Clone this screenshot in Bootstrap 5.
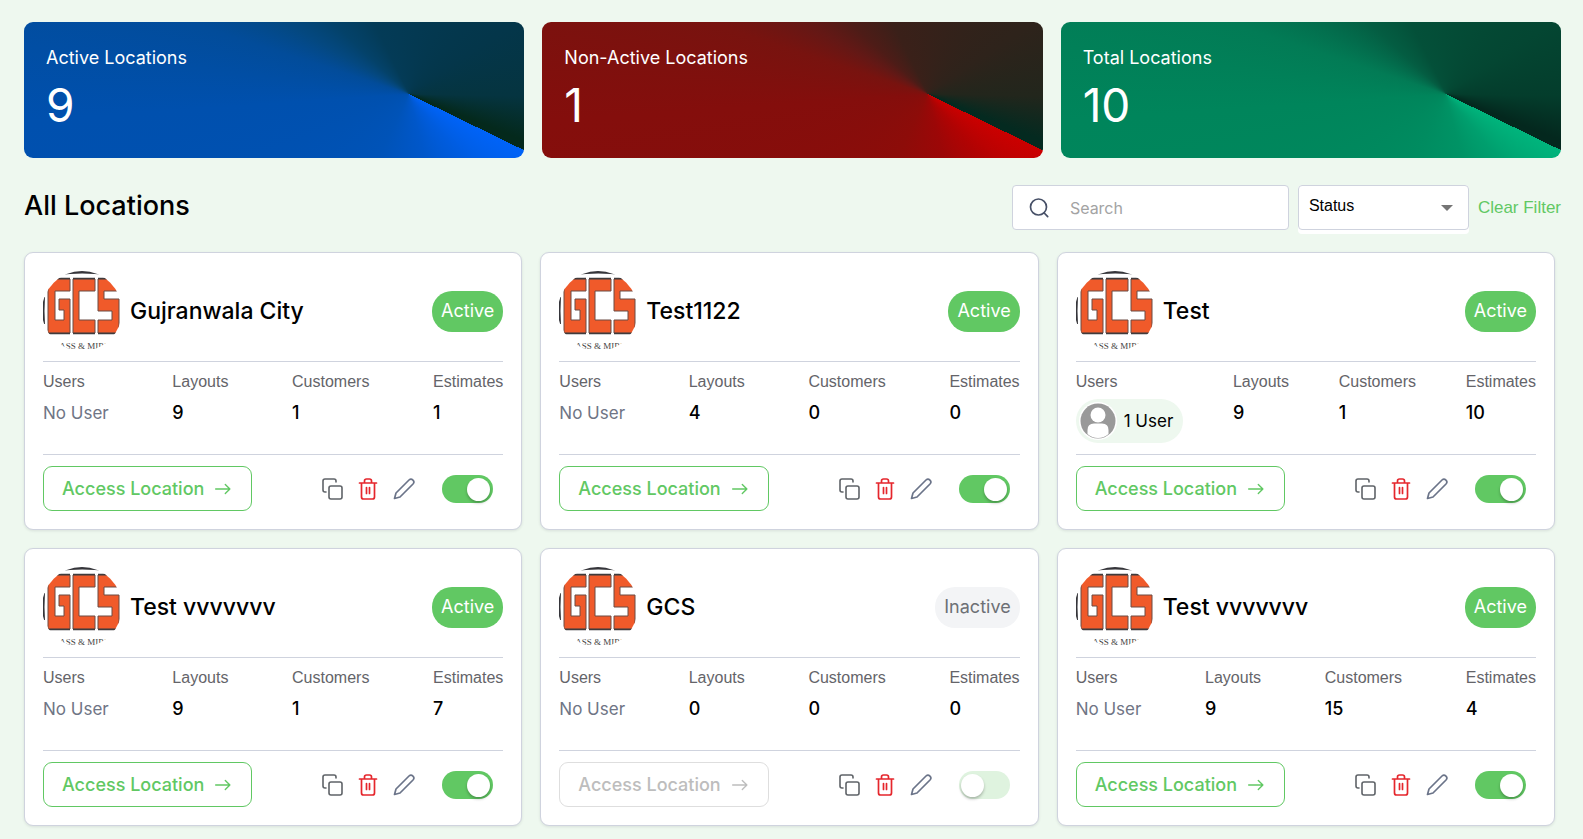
<!DOCTYPE html>
<html lang="en">
<head>
<meta charset="utf-8">
<meta name="viewport" content="width=device-width, initial-scale=1">
<title>Locations</title>
<link href="https://cdn.jsdelivr.net/npm/bootstrap@5.3.0/dist/css/bootstrap.min.css" rel="stylesheet">
<style>
  :root { --brand: #61c863; --line: #cfd3de; --page: #eef8ef; }
  body { background: var(--page); font-family: Inter, "Liberation Sans", sans-serif; color: #000; font-size: 18px; }
  .page { padding: 22px 22px 12px 24px; }
  .tiles, .cards { display: grid; grid-template-columns: repeat(3, minmax(0, 1fr)); gap: 18px; }
  .cards { padding-right: 6px; }
  .arial { font-family: "Liberation Sans", Arial, sans-serif; font-size: 16px; line-height: 24px; }

  .tile { height: 136px; border-radius: 9px; color: #fff; padding: 22px; }
  .tile-label { font-size: 18px; line-height: 28px; font-weight: 400; margin: 0; }
  .tile-count { font-size: 46px; line-height: 66px; font-weight: 400; margin: 0; }
  .tile-blue { background: conic-gradient(from 116deg at 77% 53%, #0063f8 0deg, #005cde 25deg, #0057ca 50deg, #0053b8 90deg, #0050ae 150deg, #024c9a 172deg, #044880 184deg, #04426a 197deg, #043b57 218deg, #04364a 300deg, #053440 335deg, #04291c 356deg); }
  .tile-red { background: conic-gradient(from 116deg at 77% 53%, #cb0000 0deg, #b00303 25deg, #9c0707 50deg, #8d0c09 90deg, #840e0c 150deg, #78130f 172deg, #641815 184deg, #4d1c17 197deg, #3a2019 218deg, #2e231b 300deg, #22261c 335deg, #042a20 356deg); }
  .tile-green { background: conic-gradient(from 116deg at 77% 53%, #00b47c 0deg, #009f6e 25deg, #009365 50deg, #008c60 90deg, #00855b 150deg, #027b55 172deg, #036c4c 184deg, #045d42 197deg, #045039 218deg, #044632 300deg, #043d2c 335deg, #04281e 356deg); }

  .toolbar { padding: 27px 0 18px; min-height: 94px; }
  .page-title { font-size: 27px; line-height: 42px; font-weight: 500; margin: 0; }
  .search-box { width: 277px; height: 45px; background: #fff; border: 1px solid var(--line); border-radius: 4px; padding: 0 16px; gap: 21px; }
  .search-box input { font-size: 16px; border: 0; outline: 0; background: none; min-width: 0; }
  .search-box input::placeholder { color: #a3a3a3; }
  .status-box { width: 171px; background: #fff; border-radius: 4px; padding-bottom: 4px; margin-bottom: -4px; }
  .status-box select { height: 45px; border: 1px solid var(--line); border-radius: 4px; color: #000; padding: 0 36px 3px 10px;
    background: #fff url("data:image/svg+xml,%3csvg xmlns='http://www.w3.org/2000/svg' viewBox='0 0 12 6'%3e%3cpath fill='%23757575' d='M0 0h12L6 6z'/%3e%3c/svg%3e") no-repeat right 15px center / 12px 6px; }
  .clear-link { color: var(--brand); text-decoration: none; font-size: 17px; }

  .loc { background: #fff; border: 1px solid var(--line); border-radius: 9px; padding: 18px; box-shadow: 0 1px 3px rgba(16, 24, 40, .1); }
  .loc-head { padding-bottom: 10px; border-bottom: 1px solid var(--line); gap: 7px; }
  .loc-name { font-size: 23px; line-height: 32px; font-weight: 500; margin: 0; }
  .state { font-size: 18px; line-height: 27px; padding: 6px 9px 8px; border-radius: 20px; min-width: 71px; text-align: center; }
  .state-on { background: var(--brand); color: #fff; }
  .state-off { background: #f3f4f6; color: #6d7075; }
  .facts { padding: 8px 0 11px; border-bottom: 1px solid var(--line); margin: 0; }
  .facts dt { color: #646469; font-weight: 400; margin-bottom: 5px; }
  .facts dd { margin: 0; min-height: 44px; line-height: 27px; font-weight: 500; }
  .facts .nobody { color: #6f7585; font-size: 17px; font-weight: 400; }
  .user-pill { height: 44px; border-radius: 22px; background: var(--page); padding: 0 10px 0 3px; gap: 7px; font-size: 17px; font-weight: 400; }
  .loc-foot { padding-top: 11px; }
  .access { height: 45px; border: 1px solid var(--brand); border-radius: 9px; background: #fff; color: var(--brand); font-size: 18px; font-weight: 500; padding: 0 17px 0 18px; gap: 8px; }
  .access:disabled { border-color: #dedede; color: #bdbdbd; }
  .tools { gap: 12px; padding-right: 10px; }
  .tool { border: 0; background: none; padding: 0; width: 24px; height: 24px; display: flex; }
  .toggle { width: 51px; height: 28px; margin: 0 0 0 14px; appearance: none; border-radius: 14px; background: #dff3df; position: relative; cursor: pointer; }
  .toggle::before { content: ""; position: absolute; width: 23px; height: 23px; left: 2px; top: 3px; border-radius: 50%; background: #fff; box-shadow: 0 2px 3px rgba(0, 0, 0, .25); }
  .toggle:checked { background: var(--brand); }
  .toggle:checked::before { left: 25px; }
</style>
</head>
<body>
<svg width="0" height="0" class="position-absolute" aria-hidden="true">
  <defs>
    <clipPath id="disc"><circle cx="39" cy="40" r="40"/></clipPath>
    <symbol id="logo" viewBox="0 0 80 80">
      <g clip-path="url(#disc)">
        <rect width="80" height="80" fill="#fff"/>
        <path d="M15 0H64V4Q39 1 15 4Z" fill="#35353a"/>
        <path d="M0 26H2Q1 40 2 53H0Z" fill="#35353a"/>
        <g fill="#f05a2a" stroke="#6b4a42" stroke-width="1">
          <path d="M5 8H27V20H12V49H21V39H16V28H27V62H5Z"/>
          <path d="M30 8H52V20H36V49H52V62H30Z"/>
          <path d="M55 8H76V20H61V28H76V62H55V49H69V40H55Z"/>
        </g>
        <path d="M5 7.500H27M30 7.500H52M55 7.500H76M5 62.500H27M30 62.500H52M55 62.500H76" stroke="#3f3b3c" stroke-width="1.500"/>
        <text x="39" y="78" text-anchor="middle" font-family="Liberation Serif, serif" font-size="9" fill="#444">GLASS &amp; MIRRO</text>
      </g>
    </symbol>
    <symbol id="avatar" viewBox="0 0 38 38">
      <circle cx="19" cy="19" r="19" fill="#fff"/>
      <circle cx="19" cy="19" r="17.500" fill="#999"/>
      <circle cx="19" cy="13" r="7.500" fill="#fff"/>
      <path d="M8.500 32V28Q8.500 21.500 15 21.500H23Q29.500 21.500 29.500 28V32Q25 36 19 36T8.500 32Z" fill="#fff"/>
    </symbol>
    <symbol id="copy" viewBox="0 0 24 24" fill="none" stroke="#5f6368" stroke-width="1.600" stroke-linecap="round" stroke-linejoin="round">
      <rect x="9" y="9" width="13" height="13" rx="2"/><path d="M6 15H5a2 2 0 0 1-2-2V4a2 2 0 0 1 2-2h9a2 2 0 0 1 2 2v1"/>
    </symbol>
    <symbol id="trash" viewBox="0 0 24 24" fill="none" stroke="#e5262c" stroke-width="1.700" stroke-linecap="round" stroke-linejoin="round">
      <path d="M3.500 6h17M8.500 6V4a2 2 0 0 1 2-2h3a2 2 0 0 1 2 2v2M18.500 6v14a2 2 0 0 1-2 2h-9a2 2 0 0 1-2-2V6M10.500 10.500v6M13.500 10.500v6"/>
    </symbol>
    <symbol id="pencil" viewBox="0 0 24 24" fill="none" stroke="#6b7489" stroke-width="1.700" stroke-linecap="round" stroke-linejoin="round">
      <path d="M17 3a2.830 2.830 0 0 1 4 4L8 20 2.500 21.500 4 16Z"/>
    </symbol>
    <symbol id="arrow" viewBox="0 0 24 24" fill="none" stroke="currentColor" stroke-width="1.500" stroke-linecap="round" stroke-linejoin="round">
      <path d="M4 12H19.500M14.500 7l5 5-5 5"/>
    </symbol>
  </defs>
</svg>

<main class="page container-fluid">
  <section class="tiles">
    <div class="tile tile-blue"><p class="tile-label">Active Locations</p><p class="tile-count">9</p></div>
    <div class="tile tile-red"><p class="tile-label">Non-Active Locations</p><p class="tile-count">1</p></div>
    <div class="tile tile-green"><p class="tile-label">Total Locations</p><p class="tile-count">10</p></div>
  </section>

  <div class="toolbar d-flex justify-content-between align-items-start">
    <h1 class="page-title">All Locations</h1>
    <div class="d-flex align-items-start" style="gap: 9px">
      <label class="search-box d-flex align-items-center">
        <svg width="20" height="20" viewBox="0 0 20 20" fill="none" stroke="#475067" stroke-width="1.700" stroke-linecap="round" class="flex-shrink-0" aria-hidden="true"><circle cx="9.500" cy="9" r="8"/><path d="M15.200 15l3.500 3.700"/></svg>
        <input type="search" class="flex-grow-1 p-0" placeholder="Search" aria-label="Search">
      </label>
      <div class="status-box">
        <select class="form-select arial" aria-label="Status"><option>Status</option><option>Active</option><option>Inactive</option></select>
      </div>
      <a href="#" class="clear-link arial align-self-center">Clear Filter</a>
    </div>
  </div>

  <section class="cards" id="cards"></section>
</main>

<script>
  const locations = [
    { name: "Gujranwala City", users: 0, layouts: 9, customers: 1, estimates: 1, active: true },
    { name: "Test1122", users: 0, layouts: 4, customers: 0, estimates: 0, active: true },
    { name: "Test", users: 1, layouts: 9, customers: 1, estimates: 10, active: true },
    { name: "Test vvvvvvv", users: 0, layouts: 9, customers: 1, estimates: 7, active: true },
    { name: "GCS", users: 0, layouts: 0, customers: 0, estimates: 0, active: false },
    { name: "Test vvvvvvv", users: 0, layouts: 9, customers: 15, estimates: 4, active: true }
  ];
  const icon = (id, size) => `<svg width="${size}" height="${size}" class="flex-shrink-0" aria-hidden="true"><use href="#${id}"/></svg>`;
  const fact = (label, value) => `<div><dt class="arial">${label}</dt><dd>${value}</dd></div>`;
  const users = n => n
    ? `<span class="user-pill d-flex align-items-center">${icon("avatar", 38)}${n} User</span>`
    : `<span class="nobody">No User</span>`;

  document.getElementById("cards").innerHTML = locations.map(l => `
    <article class="loc">
      <div class="loc-head d-flex align-items-center">
        ${icon("logo", 80)}
        <h2 class="loc-name flex-grow-1">${l.name}</h2>
        <span class="state ${l.active ? "state-on" : "state-off"}">${l.active ? "Active" : "Inactive"}</span>
      </div>
      <dl class="facts d-flex justify-content-between">
        ${fact("Users", users(l.users))}${fact("Layouts", l.layouts)}${fact("Customers", l.customers)}${fact("Estimates", l.estimates)}
      </dl>
      <div class="loc-foot d-flex justify-content-between align-items-center">
        <button type="button" class="access d-flex align-items-center" ${l.active ? "" : "disabled"}>Access Location ${icon("arrow", 22)}</button>
        <div class="tools d-flex align-items-center">
          <button type="button" class="tool" aria-label="Copy">${icon("copy", 24)}</button>
          <button type="button" class="tool" aria-label="Delete">${icon("trash", 24)}</button>
          <button type="button" class="tool" aria-label="Edit">${icon("pencil", 24)}</button>
          <input type="checkbox" role="switch" class="toggle" aria-label="${l.name} active" ${l.active ? "checked" : ""}>
        </div>
      </div>
    </article>`).join("");
</script>
<script src="https://cdn.jsdelivr.net/npm/bootstrap@5.3.0/dist/js/bootstrap.bundle.min.js"></script>
</body>
</html>
